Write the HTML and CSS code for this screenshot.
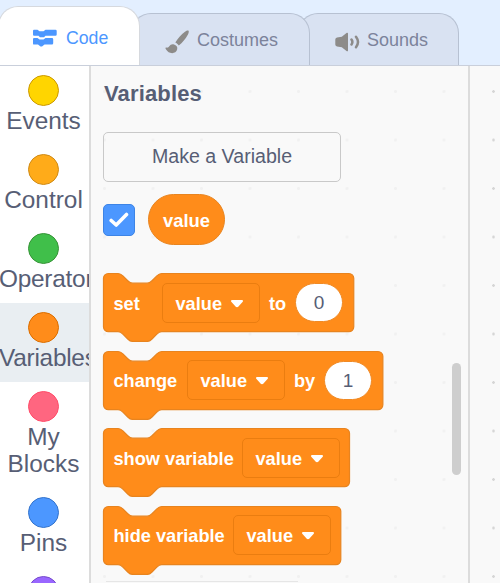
FILE: index.html
```html
<!DOCTYPE html>
<html lang="en">
<head>
<meta charset="utf-8">
<title>Block editor</title>
<link rel="stylesheet" href="styles.css">
</head>
<body>
<nav class="tabs">
  <div class="tab tab-code">
    <svg width="26" height="20" viewBox="0 0 26 20"><path fill="#4c97ff" d="M2 .8h3.500l2 1.500h4l2-1.500H23.500q1.200 0 1.200 1.200v3.600q0 1.200-1.200 1.200H13.500L12 8.300H8L6.500 6.800H2Q1 6.800 1 5.600V2Q1 .8 2 .8zM2 9h3.500l2 1.400h4l2-1.400H20q1.200 0 1.200 1.200v4q0 1.200-1.200 1.200H12.500L10 17.400H8.500L6 15.600H2q-1 0-1-1.200v-4.200q0-1.200 1-1.200z"/></svg>
    <span>Code</span>
  </div>
  <div class="tab tab-costumes">
    <svg width="24" height="24" viewBox="0 0 24 24"><g fill="#8d8b89"><path d="M23.300.6C24.300 1.400 23.600 3.400 22.800 4.800 20.700 8.700 17.400 12.700 13.800 15.500 12.800 14 11.600 13 10.300 12.500 12.800 8.500 16.500 4.300 20.300 1.500 21.300.8 22.600 0 23.300.6z"/><path d="M9 14.500c2.300.7 3.800 2.300 3.200 4.800-.8 3.400-4.300 4.500-7 3.500C3 22 1.300 20.200.5 18.400c-.2-.6.200-.8.800-.8 1.700.2 2.300-.3 3-1.300 1-1.500 2.600-2.400 4.700-1.800z"/></g></svg>
    <span>Costumes</span>
  </div>
  <div class="tab tab-sounds">
    <svg width="25" height="20" viewBox="0 0 25 20"><path fill="#8d8b89" d="M11.500.9c.8-.5 1.500-.2 1.500.7v16.800c0 .9-.7 1.200-1.500.7L6.800 15.200 2 14.500Q.3 14.200.3 12.500v-5Q.3 5.800 2 5.500l4.800-.7z"/><path fill="none" stroke="#8d8b89" stroke-width="2.500" stroke-linecap="round" d="M16.500 7.500q1.800 2.500 0 5M21 4.700q4 5.300 0 10.600"/></svg>
    <span>Sounds</span>
  </div>
</nav>
<main class="editor">
  <aside class="categories">
    <div class="category"><i class="dot events"></i><span>Events</span></div>
    <div class="category"><i class="dot control"></i><span>Control</span></div>
    <div class="category"><i class="dot operators"></i><span class="wide">Operators</span></div>
    <div class="category selected"><i class="dot variables"></i><span class="wide">Variables</span></div>
    <div class="category"><i class="dot my-blocks"></i><span>My Blocks</span></div>
    <div class="category"><i class="dot pins"></i><span>Pins</span></div>
    <div class="category"><i class="dot extra"></i></div>
  </aside>
  <section class="palette">
    <h2>Variables</h2>
    <div class="make">Make a Variable</div>
    <div class="reporter-row">
      <div class="checkbox"><svg width="20" height="16" viewBox="0 0 20 16"><path d="M2.200 8.500 7.200 13 17.500 2.500" fill="none" stroke="#fff" stroke-width="3.600" stroke-linecap="round" stroke-linejoin="round"/></svg></div>
      <div class="reporter">value</div>
    </div>
    <div class="block set">
      <svg class="shape" width="253" height="70" viewBox="-1.500 -1.500 253 70"><path transform="scale(1.2125)" d="M0 4A4 4 0 0 1 4 0H12c2 0 3 1 4 2l4 4c1 1 2 2 4 2h12c2 0 3-1 4-2l4-4c1-1 2-2 4-2H202.400a4 4 0 0 1 4 4v40a4 4 0 0 1-4 4H48c-2 0-3 1-4 2l-4 4c-1 1-2 2-4 2h-12c-2 0-3-1-4-2l-4-4c-1-1-2-2-4-2H4a4 4 0 0 1-4-4z"/></svg>
      <span class="label">set</span>
      <div class="menu"><span>value</span><svg width="14" height="10" viewBox="0 0 14 10"><path d="M2 2H12L7.900 6.700Q7 7.500 6.100 6.700z"/></svg></div>
      <span class="word">to</span>
      <div class="number">0</div>
    </div>
    <div class="block change">
      <svg class="shape" width="282" height="70" viewBox="-1.500 -1.500 282 70"><path transform="scale(1.2125)" d="M0 4A4 4 0 0 1 4 0H12c2 0 3 1 4 2l4 4c1 1 2 2 4 2h12c2 0 3-1 4-2l4-4c1-1 2-2 4-2H226.400a4 4 0 0 1 4 4v40a4 4 0 0 1-4 4H48c-2 0-3 1-4 2l-4 4c-1 1-2 2-4 2h-12c-2 0-3-1-4-2l-4-4c-1-1-2-2-4-2H4a4 4 0 0 1-4-4z"/></svg>
      <span class="label">change</span>
      <div class="menu"><span>value</span><svg width="14" height="10" viewBox="0 0 14 10"><path d="M2 2H12L7.900 6.700Q7 7.500 6.100 6.700z"/></svg></div>
      <span class="word">by</span>
      <div class="number">1</div>
    </div>
    <div class="block show">
      <svg class="shape" width="249" height="70" viewBox="-1.500 -1.500 249 70"><path transform="scale(1.2125)" d="M0 4A4 4 0 0 1 4 0H12c2 0 3 1 4 2l4 4c1 1 2 2 4 2h12c2 0 3-1 4-2l4-4c1-1 2-2 4-2H198.900a4 4 0 0 1 4 4v40a4 4 0 0 1-4 4H48c-2 0-3 1-4 2l-4 4c-1 1-2 2-4 2h-12c-2 0-3-1-4-2l-4-4c-1-1-2-2-4-2H4a4 4 0 0 1-4-4z"/></svg>
      <span class="label">show variable</span>
      <div class="menu"><span>value</span><svg width="14" height="10" viewBox="0 0 14 10"><path d="M2 2H12L7.900 6.700Q7 7.500 6.100 6.700z"/></svg></div>
    </div>
    <div class="block hide">
      <svg class="shape" width="240" height="70" viewBox="-1.500 -1.500 240 70"><path transform="scale(1.2125)" d="M0 4A4 4 0 0 1 4 0H12c2 0 3 1 4 2l4 4c1 1 2 2 4 2h12c2 0 3-1 4-2l4-4c1-1 2-2 4-2H191.700a4 4 0 0 1 4 4v40a4 4 0 0 1-4 4H48c-2 0-3 1-4 2l-4 4c-1 1-2 2-4 2h-12c-2 0-3-1-4-2l-4-4c-1-1-2-2-4-2H4a4 4 0 0 1-4-4z"/></svg>
      <span class="label">hide variable</span>
      <div class="menu"><span>value</span><svg width="14" height="10" viewBox="0 0 14 10"><path d="M2 2H12L7.900 6.700Q7 7.500 6.100 6.700z"/></svg></div>
    </div>
    <div class="next-button"></div>
    <div class="scrollbar"></div>
  </section>
  <section class="workspace"></section>
</main>
</body>
</html>
```

FILE: styles.css
```css
* { box-sizing: border-box; }
body {
  margin: 0;
  width: 500px;
  height: 583px;
  overflow: hidden;
  background: #e3efff;
  color: #575e75;
  font-family: "Liberation Sans", Arial, sans-serif;
}
svg { display: block; flex: none; }

.tabs {
  display: flex;
  align-items: flex-end;
  height: 66px;
  border-bottom: 1px solid #c9cfdb;
}
.tab {
  display: flex;
  align-items: center;
  flex: none;
  height: 52px;
  border: 1px solid #b7c1d2;
  border-bottom: 0;
  border-radius: 20px 20px 0 0;
  background: #d9e2f2;
  color: #7c839b;
  font-size: 18px;
  line-height: 22px;
}
.tab svg { margin-top: 3px; }
.tab-code {
  z-index: 3;
  position: relative;
  width: 142px;
  height: 59px;
  margin-left: -2px;
  padding: 3px 0 0 33px;
  gap: 8px;
  border-color: #d6d9de;
  background: #fff;
  color: #4c97ff;
  font-size: 17.700px;
}
.tab-costumes {
  z-index: 2;
  position: relative;
  width: 179px;
  margin-left: -9px;
  padding: 1px 0 0 33px;
  gap: 8px;
}
.tab-sounds {
  width: 161px;
  margin-left: -12px;
  padding: 1px 0 0 36px;
  gap: 7px;
}

.editor {
  display: flex;
  height: 517px;
}
.categories {
  width: 91px;
  flex: none;
  overflow: hidden;
  background: #fff;
  border-right: 2px solid #dcdcdc;
}
.category {
  display: flex;
  flex-direction: column;
  align-items: flex-start;
  min-height: 78.9px;
  padding: 9px 2px 0 0;
  font-size: 24.400px;
  line-height: 27.5px;
}
.category span {
  min-width: 87px;
  margin-top: 1.400px;
  padding-bottom: 10px;
  text-align: center;
}
.category .wide {
  margin-left: -1px;
  letter-spacing: -0.250px;
}
.selected { background: #e9eef2; }
.dot {
  width: 31px;
  height: 31px;
  margin-left: 28px;
  flex: none;
  border: 1.500px solid;
  border-radius: 50%;
}
.events { background: #ffd500; border-color: #cc9900; }
.control { background: #ffab19; border-color: #cf8b17; }
.operators { background: #40bf4a; border-color: #389438; }
.variables { background: #ff8c1a; border-color: #db6e00; }
.my-blocks { background: #ff6680; border-color: #ff4d6a; }
.pins { background: #4c97ff; border-color: #3373cc; }
.extra { background: #9966ff; border-color: #774dcb; }

.palette {
  position: relative;
  width: 379px;
  flex: none;
  padding: 15px 0 0 12px;
  overflow: hidden;
  border-right: 2px solid #dcdcdc;
  background: radial-gradient(circle at 1.500px 1.500px, #f1f1f1 1.200px, transparent 1.700px) 12px 24px / 48.500px 48.500px #f9f9f9;
}
h2 {
  height: 26px;
  margin: 0 0 25px 1px;
  font-size: 22px;
  line-height: 26px;
  letter-spacing: 0.150px;
}
.make {
  width: 238px;
  height: 50px;
  border: 1px solid #c9c9c9;
  border-radius: 5px;
  font-size: 19.600px;
  line-height: 47px;
  text-align: center;
}
.reporter-row {
  display: flex;
  align-items: center;
  gap: 13px;
  height: 51px;
  margin: 12px 0 28px;
}
.checkbox {
  display: flex;
  align-items: center;
  justify-content: center;
  width: 32px;
  height: 32px;
  border: 1px solid #3d84e6;
  border-radius: 5px;
  background: #4c97ff;
}
.reporter {
  width: 77px;
  height: 51px;
  border: 1px solid #e8841f;
  border-radius: 26px;
  background: #ff8c1a;
  color: #fff;
  font-size: 18.400px;
  font-weight: bold;
  line-height: 51px;
  text-align: center;
}
.block {
  position: relative;
  display: flex;
  align-items: center;
  height: 59px;
  margin-bottom: 18.600px;
  padding-left: 10.500px;
  color: #fff;
  font-size: 18.200px;
  font-weight: bold;
  line-height: 24px;
  white-space: nowrap;
}
.shape {
  position: absolute;
  left: -1px;
  top: -1px;
  fill: #ff8c1a;
  stroke: #e8841f;
}
.block > :not(.shape) {
  position: relative;
  flex: none;
}
.block span { padding-top: 2px; }
.set .label { width: 48px; }
.change .label { width: 73px; }
.show .label { width: 128px; }
.hide .label { width: 119px; }
.menu {
  display: flex;
  align-items: center;
  gap: 8px;
  width: 98.500px;
  height: 40px;
  padding-left: 13px;
  border: 1px solid #ea7d10;
  border-radius: 5px;
}
.menu svg {
  margin-top: 2px;
  fill: #fff;
  stroke: #fff;
  stroke-width: 2;
  stroke-linejoin: round;
}
.word {
  width: 26px;
  margin-left: 9px;
}
.change .word {
  width: 30px;
}
.number {
  width: 48px;
  height: 39px;
  border: 1px solid #f08a25;
  border-radius: 20px;
  background: #fff;
  color: #575e75;
  font-size: 19px;
  font-weight: normal;
  line-height: 38px;
  text-align: center;
}
.next-button {
  width: 192px;
  height: 40px;
  margin: -2px 0 0 3px;
  border-top: 1px solid #e6e6e6;
}
.scrollbar {
  position: absolute;
  left: 361px;
  top: 297px;
  width: 9px;
  height: 112px;
  border-radius: 5px;
  background: #cecece;
}
.workspace {
  flex: 1;
  background: radial-gradient(circle at 1.500px 1.500px, #d6d6d6 1px, transparent 1.600px) 22px 24px / 48.500px 48.500px #f9f9f9;
}
```
